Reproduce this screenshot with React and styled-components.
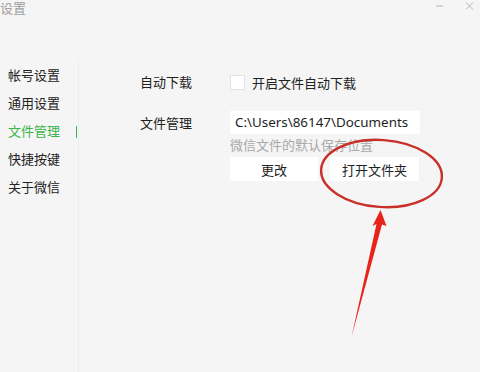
import React from "react";
import styled, { createGlobalStyle } from "styled-components";

const Global = createGlobalStyle`
  html, body { margin: 0; padding: 0; background: #f5f5f5; }
  * { box-sizing: border-box; }
`;

const Window = styled.div`
  position: relative;
  width: 480px;
  height: 372px;
  overflow: hidden;
  background: #f5f5f5;
  font-family: "Noto Sans CJK SC", "Noto Sans", sans-serif;
  display: flex;
  flex-direction: column;
`;

const TitleBar = styled.div`
  height: 20px;
  display: flex;
  align-items: flex-start;
  justify-content: space-between;
`;

const Title = styled.div`
  font-size: 13px;
  line-height: 15px;
  color: #a0a0a0;
  padding-left: 0;
`;

const WinButtons = styled.div`
  display: flex;
  gap: 20px;
  padding-right: 6px;
  padding-top: 2px;
`;

const WinBtn = styled.div`
  width: 10px;
  height: 8px;
  display: flex;
  align-items: center;
  justify-content: center;
`;

const Body = styled.div`
  flex: 1;
  display: flex;
`;

const Sidebar = styled.div`
  width: 79px;
  margin-top: 41px;
  border-right: 1px solid #ececec;
  display: flex;
  flex-direction: column;
`;

const NavItem = styled.div`
  position: relative;
  height: 28px;
  line-height: 28px;
  padding-left: 8px;
  font-size: 13px;
  color: ${(p) => (p.$active ? "#3bb44a" : "#222")};
  &::after {
    content: "";
    display: ${(p) => (p.$active ? "block" : "none")};
    position: absolute;
    left: 76px;
    top: 9px;
    width: 1px;
    height: 12px;
    background: #3bb44a;
  }
`;

const Main = styled.div`
  flex: 1;
  padding-left: 61px;
  padding-top: 50px;
  display: flex;
  flex-direction: column;
  gap: 17px;
`;

const Row = styled.div`
  display: grid;
  grid-template-columns: 90px 1fr;
  align-items: ${(p) => (p.$top ? "start" : "center")};
`;

const Label = styled.div`
  font-size: 13px;
  color: #222;
  line-height: ${(p) => (p.$tall ? "23px" : "24px")};
`;

const CheckLine = styled.label`
  display: flex;
  align-items: center;
  gap: 7px;
  font-size: 13px;
  color: #222;
  height: 24px;
`;

const Box = styled.span`
  width: 15px;
  height: 15px;
  background: #fff;
  border: 1px solid #e2e2e2;
`;

const Field = styled.div`
  display: flex;
  flex-direction: column;
`;

const PathInput = styled.div`
  width: 190px;
  height: 23px;
  background: #fff;
  padding-left: 5px;
  font-family: "Noto Sans", "Open Sans", sans-serif;
  font-size: 13.4px;
  line-height: 23px;
  color: #1e1e1e;
  white-space: nowrap;
`;

const Hint = styled.div`
  margin-top: 2px;
  font-size: 13px;
  line-height: 17px;
  color: #a8a8a8;
`;

const Buttons = styled.div`
  display: flex;
  gap: 12px;
  margin-top: 4px;
`;

const Button = styled.div`
  width: ${(p) => p.$w}px;
  height: 24px;
  background: #fff;
  font-size: 13px;
  color: #222;
  display: flex;
  align-items: center;
  justify-content: center;
`;

const Overlay = styled.svg`
  position: absolute;
  left: 0;
  top: 0;
  pointer-events: none;
`;

export default function App() {
  return (
    <>
      <Global />
      <Window>
        <TitleBar>
          <Title>设置</Title>
          <WinButtons>
            <WinBtn>
              <svg width="9" height="8" viewBox="0 0 9 8">
                <line x1="1" y1="4" x2="8" y2="4" stroke="#b5b5b5" strokeWidth="1" />
              </svg>
            </WinBtn>
            <WinBtn>
              <svg width="9" height="8" viewBox="0 0 9 8">
                <line x1="1" y1="0.5" x2="8" y2="7.5" stroke="#b5b5b5" strokeWidth="1" />
                <line x1="8" y1="0.5" x2="1" y2="7.5" stroke="#b5b5b5" strokeWidth="1" />
              </svg>
            </WinBtn>
          </WinButtons>
        </TitleBar>
        <Body>
          <Sidebar>
            <NavItem>帐号设置</NavItem>
            <NavItem>通用设置</NavItem>
            <NavItem $active>文件管理</NavItem>
            <NavItem>快捷按键</NavItem>
            <NavItem>关于微信</NavItem>
          </Sidebar>
          <Main>
            <Row>
              <Label>自动下载</Label>
              <CheckLine>
                <Box />
                开启文件自动下载
              </CheckLine>
            </Row>
            <Row $top>
              <Label $tall>文件管理</Label>
              <Field>
                <PathInput>C:\Users\86147\Documents</PathInput>
                <Hint>微信文件的默认保存位置</Hint>
                <Buttons>
                  <Button $w={88}>更改</Button>
                  <Button $w={89}>打开文件夹</Button>
                </Buttons>
              </Field>
            </Row>
          </Main>
        </Body>
        <Overlay width="480" height="372" viewBox="0 0 480 372">
          <ellipse
            cx="381.5"
            cy="173.5"
            rx="60.5"
            ry="33.5"
            fill="none"
            stroke="#c9302a"
            strokeWidth="2.4"
            transform="rotate(4 381.5 173.5)"
          />
          <polygon
            points="380.5,210 386.5,226 382,224.5 351.5,337 376.5,224 372.5,226"
            fill="#e8231c"
          />
        </Overlay>
      </Window>
    </>
  );
}
